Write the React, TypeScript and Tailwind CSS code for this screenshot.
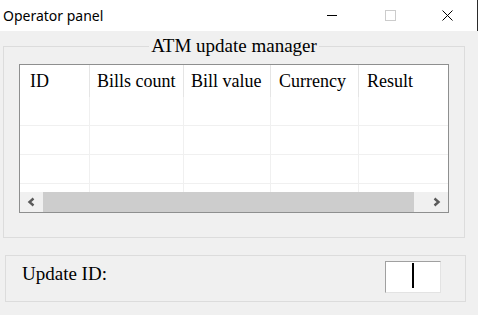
import React from "react";

const columns = [
  { label: "ID", width: "w-[70px]", pad: "pl-[10px]" },
  { label: "Bills count", width: "w-[94px]", pad: "pl-[7px]" },
  { label: "Bill value", width: "w-[87px]", pad: "pl-[7px]" },
  { label: "Currency", width: "w-[88px]", pad: "pl-[8px]" },
  { label: "Result", width: "flex-1", pad: "pl-[8px]" },
];

const rows = [0, 1, 2, 3];

function TitleBar() {
  return (
    <div className="flex h-[31px] items-center border-r border-[#2b2b2b] bg-white">
      <span className="pl-[3px] font-['Noto_Sans',sans-serif] text-[14px] leading-none text-black">Operator panel</span>
      <div className="ml-auto flex h-full">
        <div className="flex w-[58px] items-center justify-center">
          <div className="h-px w-[10px] bg-black" />
        </div>
        <div className="flex w-[58px] items-center justify-center">
          <div className="h-[11px] w-[11px] border border-[#cccccc]" />
        </div>
        <div className="flex w-[58px] items-center justify-center pr-[2px]">
          <svg width="11" height="11" viewBox="0 0 11 11">
            <path d="M0.5 0.5 L10.5 10.5 M10.5 0.5 L0.5 10.5" stroke="#000" strokeWidth="1" />
          </svg>
        </div>
      </div>
    </div>
  );
}

function Chevron({ dir }: { dir: "left" | "right" }) {
  return (
    <svg width="9" height="10" viewBox="0 0 9 10">
      <path d={dir === "left" ? "M6.5 1.5 L2.5 5 L6.5 8.5" : "M2.5 1.5 L6.5 5 L2.5 8.5"} stroke="#5a5a5a" strokeWidth="2.4" fill="none" />
    </svg>
  );
}

function ListView() {
  return (
    <div className="mt-[8px] flex h-[149px] w-[430px] flex-col overflow-hidden border border-[#8e8f8f] bg-white font-['Liberation_Serif',serif] text-[18px] text-black">
      <div className="flex h-[32px] shrink-0">
        {columns.map((col, i) => (
          <div key={col.label} className={"flex items-center whitespace-nowrap " + col.width + " " + col.pad + (i < columns.length - 1 ? " border-r border-[#e5e5e5]" : "")}>
            {col.label}
          </div>
        ))}
      </div>
      <div className="flex-1 overflow-hidden">
        {rows.map((r) => (
          <div key={r} className="flex h-[29px] border-b border-[#f0f0f0]">
            {columns.map((col, i) => (
              <div key={col.label} className={col.width + (i < columns.length - 1 ? " border-r border-[#f0f0f0]" : "")} />
            ))}
          </div>
        ))}
      </div>
      <div className="flex h-[20px] shrink-0 items-center bg-[#f0f0f0]">
        <div className="flex w-[23px] items-center justify-center">
          <Chevron dir="left" />
        </div>
        <div className="h-full w-[371px] bg-[#cdcdcd]" />
        <div className="flex flex-1 items-center justify-center pl-[10px]">
          <Chevron dir="right" />
        </div>
      </div>
    </div>
  );
}

export default function App() {
  return (
    <div className="h-[315px] w-[478px] overflow-hidden bg-[#f0f0f0]">
      <TitleBar />

      <fieldset className="ml-[3px] mt-[5px] h-[202px] w-[462px] border border-[#dcdcdc] px-[15px] pb-[24px]">
        <legend className="mx-auto px-[2px] font-['Liberation_Serif',serif] text-[19px] leading-[20px] text-black">ATM update manager</legend>
        <ListView />
      </fieldset>

      <div className="ml-[5px] mt-[17px] flex h-[47px] w-[461px] items-start justify-between border border-[#dcdcdc] pl-[16px] pr-[24px]">
        <span className="mt-[8px] font-['Liberation_Serif',serif] text-[19px] leading-[20px] text-black">Update ID:</span>
        <div className="mt-[5px] flex h-[32px] w-[56px] border border-b-[#e3e3e3] border-l-[#a0a0a0] border-r-[#e3e3e3] border-t-[#a0a0a0] bg-white pl-[26px] pt-px">
          <div className="h-[25px] w-[2px] bg-black" />
        </div>
      </div>
    </div>
  );
}
